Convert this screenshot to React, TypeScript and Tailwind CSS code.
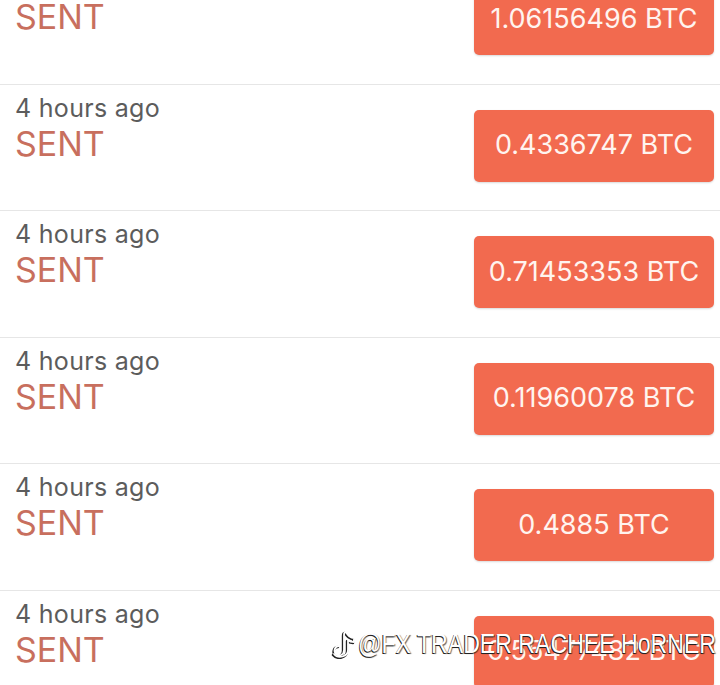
import React from "react";

const amounts = [
  "1.06156496 BTC",
  "0.4336747 BTC",
  "0.71453353 BTC",
  "0.11960078 BTC",
  "0.4885 BTC",
  "0.55477482 BTC",
];

function Row({ amount }: { amount: string }) {
  return (
    <div className="relative h-[126.5px] border-b border-[#e6e6e6] flex items-start justify-between pl-[15px] pr-[6px]">
      <div className="flex flex-col pt-[8px]">
        <span className="text-[25px] leading-[30px] text-[#5c5c5c] tracking-[0.3px]">4 hours ago</span>
        <span className="text-[34px] leading-[40px] text-[#c86f5e] mt-[1px]">SENT</span>
      </div>
      <div className="mt-[25px] w-[240px] h-[72px] rounded-[5px] bg-[#f26a4f] flex items-center justify-center shadow-[0_1px_2px_rgba(0,0,0,0.15)]">
        <span className="text-[27px] text-[#fff4ef] tracking-[0px]">{amount}</span>
      </div>
    </div>
  );
}

export default function App() {
  return (
    <div
      className="relative w-[720px] h-[685px] overflow-hidden bg-white"
      style={{ fontFamily: "Inter, 'Noto Sans', sans-serif" }}
    >
      <div className="mt-[-42px]">
        {amounts.map((a, i) => (
          <Row key={i} amount={a} />
        ))}
      </div>
      <div
        className="absolute left-[331px] top-[627px] flex items-center whitespace-nowrap text-white text-[28px] leading-[34px]"
        style={{
          fontFamily: "'Liberation Sans', Arial, sans-serif",
          textShadow: "-1px 1px 0 #222, 1px 1px 1px rgba(0,0,0,0.6)",
        }}
      >
        <svg width="26" height="30" viewBox="0 0 26 30" fill="none">
          <g transform="translate(-1,1)" stroke="#222" strokeWidth="2.4" strokeLinecap="round" strokeLinejoin="round">
            <path d="M15 3 C14 3 13 4 13 6 L13 21 C13 26 8 28 5 25 C2 22 4 17 8 17" />
            <path d="M15 3 C17 7 20 9 23 9 L23 13 C20 13 18 12 17 11 L17 21 C17 28 7 30 3 25" />
          </g>
          <g stroke="#fff" strokeWidth="1.8" strokeLinecap="round" strokeLinejoin="round">
            <path d="M15 3 C14 3 13 4 13 6 L13 21 C13 26 8 28 5 25 C2 22 4 17 8 17" />
            <path d="M15 3 C17 7 20 9 23 9 L23 13 C20 13 18 12 17 11 L17 21 C17 28 7 30 3 25" />
          </g>
        </svg>
        <span className="inline-block origin-left scale-x-[0.825] ml-[1px]">@FX TRADER RACHEE HoRNER</span>
      </div>
    </div>
  );
}
